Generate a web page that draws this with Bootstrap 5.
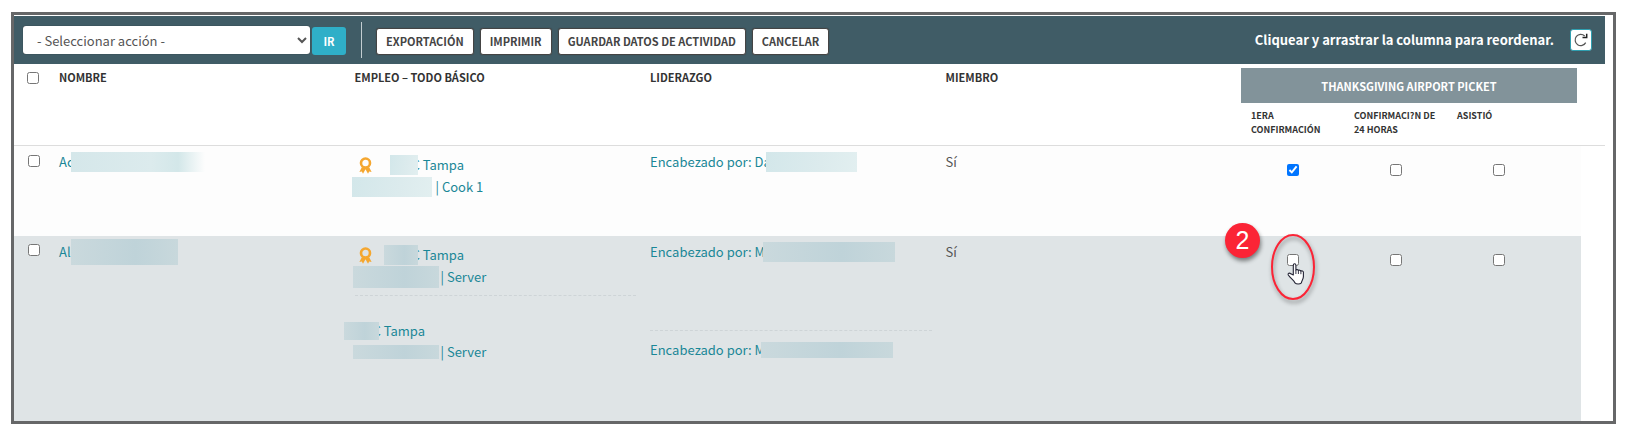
<!DOCTYPE html>
<html lang="es">
<head>
<meta charset="utf-8">
<meta name="viewport" content="width=device-width, initial-scale=1">
<title>Datos de actividad</title>
<link href="https://cdn.jsdelivr.net/npm/bootstrap@5.3.0/dist/css/bootstrap.min.css" rel="stylesheet">
<style>
body{font-family:"Noto Sans CJK SC","Open Sans",sans-serif;font-size:13px;line-height:22px;color:#555;background:#fff}
.page{padding:12px 10px 7px 11px}
.frame{border:3px solid #666768;padding-top:1px}
.toolbar{background:#405c66;height:48px;margin-right:8px;padding:0 13px 0 9px}
.action{width:287px;height:28px;border:0;border-radius:3px;background:#fff;color:#555;font-size:13px;line-height:20px;padding:0 0 0 10px;box-shadow:0 0 1px #222}
.go{width:34px;height:28px;margin:2px 0 0 2px;padding:0;border-radius:3px;background:#2fafc8;color:#fff;font-size:11px;font-weight:700;line-height:20px;border:0}
.rule{width:1px;height:36px;background:#c3cdd1;margin:0 14px 0 15px}
.tools{gap:6px}
.tool{height:27px;padding:0 9px;border:1px solid #444;box-shadow:0 0 1px #333;border-radius:3px;background:#fff;color:#444;font-size:11px;font-weight:700;line-height:20px;margin-top:2px}
.hint{color:#fff;font-size:13px;font-weight:700}
.reload{width:22px;height:22px;padding:0;border:1px solid #2f9fb0;border-radius:3px;background:#fff}
.roster{table-layout:fixed;width:calc(100% - 8px);border-collapse:separate;border-spacing:0}
.roster th,.roster td{padding:0;vertical-align:top;text-align:left}
.roster thead th{font-size:11px;font-weight:700;line-height:14px;color:#333}
.roster thead th[rowspan]{padding-top:6px;border-bottom:1px solid #ddd}
.roster thead .sub th{padding:5px 0 0 10px;height:42px;font-size:9px;border-bottom:1px solid #ddd}
.roster thead th.tick{padding:8px 0 0 13px}
.event{background:#82939a;color:#fff;height:35px;margin:4px 4px 1px 0}
.roster tbody td{padding-top:5px;background:#fdfdfd}
.roster tbody .even td{background:#dfe4e6}
.roster tbody td.gutter,.roster tbody .even td.gutter{background:#fff}
.roster tbody td.jobs{padding-top:8px}
.roster tbody td.tick{padding:9px 0 0 14px}
.roster tbody .even td.tick{padding-top:8px}
.roster tbody td.mark-cell{padding:18px 0 0 46px}
.odd{height:90px}.even{height:185px}
.roster input{display:block;width:12px;height:12px;margin:0}
.roster a{color:#1a8797;text-decoration:none}
.entry{display:flex;align-items:center;height:22px;white-space:pre}
.veil{flex:none;height:20px;background:linear-gradient(100deg,#d3e7ea,#dcebed 60%,#e2eff0)}
.even .veil{background:linear-gradient(90deg,#cad9dd,#bfd3d9 60%,#c8d8dc)}
.veil-name{width:134px;margin-left:-3px}
.odd .veil-name{background:linear-gradient(90deg,#d5e7ea,#dcebed 60%,#d3e7e9 80%,#fdfdfd)}
.even .veil-name{width:107px;height:26px;margin-left:0}
.veil-local{width:28px;margin:0 -6px 0 18px;z-index:1}
.even .veil-local{width:34px;margin-left:12px}
.even .bare .veil-local{width:35px;margin-left:-11px;height:18px}
.veil-site{width:80px;margin:0 4px 0 -3px}
.even .veil-site{width:86px;margin:0 2px 0 -2px;height:22px}
.even .bare .veil-site{height:14px}
.veil-lead{width:91px;margin-left:-5px}
.even .veil-lead{width:132px;margin-left:-2px}
.even .low .veil-lead{height:16px;margin-left:-4px}
.dash{border-top:1px dashed #ced4d7}
.dash-job{margin:7px 14px 24px 0}
.dash-lead{margin:67px 14px 8px 0}
.bare .entry{height:21px}
.medal{margin-left:4px}
.spot{position:relative}
.step{position:absolute;left:-62px;top:-31px;width:35px;height:35px;border-radius:50%;background:#fb2436;color:#fff;font:25px/35px "Liberation Sans",sans-serif;text-align:center;box-shadow:1px 3px 4px #0007}
.ring{position:absolute;left:-24px;top:-26px;overflow:visible;pointer-events:none}
</style>
</head>
<body>
<main class="page">
<div class="frame">
<div class="toolbar d-flex align-items-center">
<select class="action" aria-label="Seleccionar acción"><option>- Seleccionar acción -</option></select>
<button class="btn go" type="button">IR</button>
<div class="rule"></div>
<div class="tools d-flex">
<button class="tool" type="button">EXPORTACIÓN</button>
<button class="tool" type="button">IMPRIMIR</button>
<button class="tool" type="button">GUARDAR DATOS DE ACTIVIDAD</button>
<button class="tool" type="button">CANCELAR</button>
</div>
<span class="hint ms-auto me-3">Cliquear y arrastrar la columna para reordenar.</span>
<button class="reload d-flex align-items-center justify-content-center" type="button" aria-label="Restablecer"><svg width="14" height="14" viewBox="0 0 14 14" fill="none" stroke="#555" stroke-width="1.2"><path d="M11.7 9.6A5.6 5.6 0 1 1 10.7 3"/><path d="M8.5 4.6H12.7V.8" stroke="#222" stroke-width="1.5"/></svg></button>
</div>
<table class="roster">
<colgroup><col style="width:45px"><col><col><col><col><col style="width:103px"><col style="width:103px"><col style="width:134px"><col style="width:24px"></colgroup>
<thead>
<tr>
<th rowspan="2" class="tick"><input type="checkbox" aria-label="Seleccionar todo"></th>
<th rowspan="2">NOMBRE</th><th rowspan="2">EMPLEO – TODO BÁSICO</th><th rowspan="2">LIDERAZGO</th><th rowspan="2">MIEMBRO</th>
<th colspan="3"><div class="event d-flex align-items-center justify-content-center">THANKSGIVING AIRPORT PICKET</div></th>
<th rowspan="2"></th>
</tr>
<tr class="sub"><th>1ERA<br>CONFIRMACIÓN</th><th>CONFIRMACI?N DE<br>24 HORAS</th><th>ASISTIÓ</th></tr>
</thead>
<tbody>
<tr class="odd">
<td class="tick"><input type="checkbox" aria-label="Seleccionar Ac"></td>
<td><div class="entry"><a href="#">Ac</a><span class="veil veil-name"></span></div></td>
<td class="jobs">
<div class="entry"><svg class="medal" width="13" height="17" viewBox="0 0 13 17"><path d="M2.800 10.200.4 15l2.400-.4L4 16.800l2.500-4.600L9 16.800l1.200-2.200 2.400.4-2.400-4.800z" fill="#f5a730"/><circle cx="6.500" cy="6" r="4.500" fill="#fdfdfd" stroke="#f5a730" stroke-width="2.600"/></svg><span class="veil veil-local"></span><a href="#">C Tampa</a></div>
<div class="entry"><span class="veil veil-site"></span><a href="#">| Cook 1</a></div>
</td>
<td><div class="entry"><a href="#">Encabezado por: Da</a><span class="veil veil-lead"></span></div></td>
<td>Sí</td>
<td class="mark-cell"><input type="checkbox" checked aria-label="1era confirmación"></td>
<td class="mark-cell"><input type="checkbox" aria-label="Confirmación de 24 horas"></td>
<td class="mark-cell"><input type="checkbox" aria-label="Asistió"></td>
<td class="gutter"></td>
</tr>
<tr class="even">
<td class="tick"><input type="checkbox" aria-label="Seleccionar Al"></td>
<td><div class="entry"><a href="#">Al</a><span class="veil veil-name"></span></div></td>
<td class="jobs">
<div class="entry"><svg class="medal" width="13" height="17" viewBox="0 0 13 17"><path d="M2.800 10.200.4 15l2.400-.4L4 16.800l2.500-4.600L9 16.800l1.200-2.200 2.400.4-2.400-4.800z" fill="#f5a730"/><circle cx="6.500" cy="6" r="4.500" fill="#dfe4e6" stroke="#f5a730" stroke-width="2.600"/></svg><span class="veil veil-local"></span><a href="#">C Tampa</a></div>
<div class="entry"><span class="veil veil-site"></span><a href="#">| Server</a></div>
<div class="dash dash-job"></div>
<div class="bare">
<div class="entry"><span class="veil veil-local"></span><a href="#">C Tampa</a></div>
<div class="entry"><span class="veil veil-site"></span><a href="#">| Server</a></div>
</div>
</td>
<td>
<div class="entry"><a href="#">Encabezado por: M</a><span class="veil veil-lead"></span></div>
<div class="dash dash-lead"></div>
<div class="entry low"><a href="#">Encabezado por: M</a><span class="veil veil-lead"></span></div>
</td>
<td>Sí</td>
<td class="mark-cell"><div class="spot"><input type="checkbox" aria-label="1era confirmación"><span class="step">2</span>
<svg class="ring" width="60" height="76" viewBox="0 0 60 76" fill="none"><ellipse cx="30" cy="39" rx="21" ry="32" stroke="#fb2436" stroke-width="2" style="filter:drop-shadow(1px 3px 2px #0006)"/><path d="M30.300 47V37.300c0-2 2.600-2 2.600 0V42c.5-.7 2.300-.5 2.500.5.600-.7 2.400-.4 2.500.7.700-.6 2.500-.2 2.500 1.100v4.200c0 2.600-1.700 3.800-2 6.300-1.500 1.500-5 1.500-6.500 0-.8-2.400-4.300-4.200-6.600-7.800-.8-1.800 1.200-2.400 2.500-1.200z" fill="#fff" stroke="#223" stroke-width="1.100" stroke-linejoin="round"/><path d="M32.900 42v4M35.400 42.500v3.500M37.900 43.200v3" stroke="#223" stroke-width=".9"/></svg></div></td>
<td class="mark-cell"><input type="checkbox" aria-label="Confirmación de 24 horas"></td>
<td class="mark-cell"><input type="checkbox" aria-label="Asistió"></td>
<td class="gutter"></td>
</tr>
</tbody>
</table>
</div>
</main>
<script src="https://cdn.jsdelivr.net/npm/bootstrap@5.3.0/dist/js/bootstrap.bundle.min.js"></script>
</body>
</html>
